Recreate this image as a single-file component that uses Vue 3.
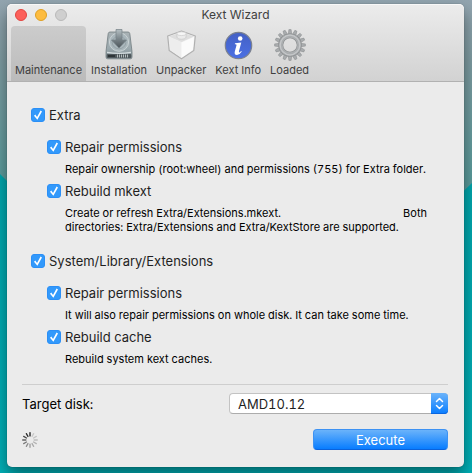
<script setup>
import { ref } from 'vue'

const tabs = [
  { id: 'maintenance', label: 'Maintenance' },
  { id: 'installation', label: 'Installation' },
  { id: 'unpacker', label: 'Unpacker' },
  { id: 'info', label: 'Kext Info' },
  { id: 'loaded', label: 'Loaded' },
]
const active = ref('maintenance')
const disk = ref('AMD10.12')

const groups = ref([
  {
    id: 'extra',
    label: 'Extra',
    on: true,
    items: [
      {
        id: 'extra-repair',
        label: 'Repair permissions',
        on: true,
        lines: [['Repair ownership (root:wheel) and permissions (755) for Extra folder.']],
      },
      {
        id: 'extra-mkext',
        label: 'Rebuild mkext',
        on: true,
        lines: [
          ['Create or refresh Extra/Extensions.mkext.', 'Both'],
          ['directories: Extra/Extensions and Extra/KextStore are supported.'],
        ],
      },
    ],
  },
  {
    id: 'sle',
    label: 'System/Library/Extensions',
    on: true,
    items: [
      {
        id: 'sle-repair',
        label: 'Repair permissions',
        on: true,
        lines: [['It will also repair permissions on whole disk. It can take some time.']],
      },
      {
        id: 'sle-cache',
        label: 'Rebuild cache',
        on: true,
        lines: [['Rebuild system kext caches.']],
      },
    ],
  },
])

// Spinner spokes, clockwise from twelve o'clock; the darkest one leads.
const spokes = [0.9, 0.15, 0.17, 0.2, 0.24, 0.28, 0.34, 0.4, 0.48, 0.58, 0.7, 0.82]
const teeth = Array.from({ length: 16 }, (_, i) => (i * 360) / 16)
</script>

<template>
  <div class="desktop">
    <main class="window">
      <header class="chrome">
        <div class="titlebar">
          <div class="lights">
            <button class="light close" aria-label="Close"></button>
            <button class="light minimise" aria-label="Minimise"></button>
            <button class="light zoom" aria-label="Zoom" disabled></button>
          </div>
          <h1>Kext Wizard</h1>
        </div>
        <nav class="toolbar">
          <button
            v-for="t in tabs"
            :key="t.id"
            class="tab"
            :class="{ active: active === t.id }"
            @click="active = t.id"
          >
            <svg v-if="t.id === 'installation'" class="icon" viewBox="0 0 32 32" aria-hidden="true">
              <defs>
                <linearGradient id="case" x1="0" y1="0" x2="0" y2="1">
                  <stop offset="0" stop-color="#a9b2b5" />
                  <stop offset="0.6" stop-color="#9caaaf" />
                  <stop offset="1" stop-color="#7f8b90" />
                </linearGradient>
                <linearGradient id="arrow" x1="0" y1="0" x2="0" y2="1">
                  <stop offset="0" stop-color="#b4bec2" />
                  <stop offset="0.5" stop-color="#7b868b" />
                  <stop offset="1" stop-color="#4b5459" />
                </linearGradient>
              </defs>
              <path d="M7 3h18q1.500 0 1.800 1.600L29 22.500V28q0 1.800-1.600 1.800H4.600Q3 29.800 3 28v-5.500L5.200 4.600Q5.500 3 7 3z" fill="url(#case)" stroke="#727d81" stroke-width=".8" />
              <ellipse cx="16" cy="13" rx="9.600" ry="9.300" fill="#a9b6bb" stroke="#c9d2d4" stroke-width="1" />
              <ellipse cx="16" cy="13.500" rx="6.800" ry="6.300" fill="none" stroke="#8d999e" stroke-width=".7" />
              <path d="M4 23.300q12 2 24 0" fill="none" stroke="#d5dddf" stroke-width="1.200" />
              <rect x="3.800" y="25" width="24.400" height="4" rx="1" fill="#4f585c" />
              <path d="M14.500 25.500v3M16.500 25.500v3M18.500 25.500v3M20.500 25.500v3M22.500 25.500v3M24.500 25.500v3" stroke="#c1c8ca" stroke-width=".9" />
              <path d="M5 27h7" stroke="#2b3235" stroke-width="1.800" />
              <path d="M13 .5h6v10.500h4.500L16 19l-7.500-8H13z" fill="url(#arrow)" stroke="#768186" stroke-width=".7" />
            </svg>
            <svg v-else-if="t.id === 'unpacker'" class="icon" viewBox="0 0 32 32" aria-hidden="true">
              <path d="M2.700 7 16.500 2 30.300 7 28.800 21.500 16.500 29.800 4.200 21.500z" fill="#f0f0f0" stroke="#b0b0b0" stroke-width="1.200" stroke-linejoin="round" />
              <path d="M4 7.500 16.500 3 29 7.500 16.500 13z" fill="#dedede" />
              <path d="M4 8 16.500 13.400v15.300L5.200 21z" fill="#ededed" />
              <path d="M29 8 16.500 13.400v15.300L27.800 21z" fill="#fbfbfb" />
              <path d="M12 4.700v3.400c0 2.800 9 2.800 9 0V4.700z" fill="#ebebeb" stroke="#c4c4c4" stroke-width=".6" />
              <ellipse cx="16.500" cy="4.700" rx="4.500" ry="1.900" fill="#f6f6f6" stroke="#c4c4c4" stroke-width=".6" />
            </svg>
            <svg v-else-if="t.id === 'info'" class="icon" viewBox="0 0 32 32" aria-hidden="true">
              <defs>
                <linearGradient id="ball" x1="0" y1="0" x2="0" y2="1">
                  <stop offset="0" stop-color="#4460c4" />
                  <stop offset="1" stop-color="#4b70e4" />
                </linearGradient>
              </defs>
              <circle cx="16.500" cy="16.500" r="13.200" fill="url(#ball)" stroke="#7b818f" stroke-width="1.200" />
              <circle cx="18.200" cy="9.500" r="2.300" fill="#fff" />
              <path d="M13 14.200 19.300 13.400 17 22q-.4 1.600.6 1.400.8-.3 1.500-1.300l.7.500q-2 3.300-4.800 3.300-3 0-2.200-3.500l1.700-6.200q.3-1.200-1.700-1z" fill="#fff" />
            </svg>
            <svg v-else-if="t.id === 'loaded'" class="icon" viewBox="0 0 32 32" aria-hidden="true">
              <path
                v-for="a in teeth"
                :key="a"
                d="M14.200 5.500 14.900.6h2.200l.7 4.900z"
                :transform="`rotate(${a} 16 16)`"
                fill="#a9acae"
                stroke="#86898b"
                stroke-width=".5"
              />
              <circle cx="16" cy="16" r="9.200" fill="none" stroke="#86898b" stroke-width="4.800" />
              <circle cx="16" cy="16" r="9.200" fill="none" stroke="#abaeb0" stroke-width="3.800" />
              <circle cx="16" cy="16" r="9.800" fill="none" stroke="#c6c8ca" stroke-width="1.200" />
            </svg>
            <span v-else class="icon"></span>
            <span>{{ t.label }}</span>
          </button>
        </nav>
      </header>

      <form class="body" @submit.prevent>
        <section v-for="g in groups" :key="g.id" class="group">
          <div class="check">
            <input :id="g.id" v-model="g.on" type="checkbox" />
            <label :for="g.id">{{ g.label }}</label>
          </div>
          <div class="items">
            <div v-for="it in g.items" :key="it.id">
              <div class="check">
                <input :id="it.id" v-model="it.on" type="checkbox" />
                <label :for="it.id">{{ it.label }}</label>
              </div>
              <div class="note">
                <div v-for="(line, i) in it.lines" :key="i" class="line">
                  <span v-for="part in line" :key="part">{{ part }}</span>
                </div>
              </div>
            </div>
          </div>
        </section>

        <footer class="footer">
          <div class="row">
            <label for="disk">Target disk:</label>
            <div class="picker">
              <select id="disk" v-model="disk">
                <option>AMD10.12</option>
              </select>
              <svg class="stepper" viewBox="0 0 17 21" aria-hidden="true">
                <path d="M5.500 8.500 8.500 5.500l3 3M5.500 12.500l3 3 3-3" fill="none" stroke="#fff" stroke-width="1.500" stroke-linecap="round" stroke-linejoin="round" />
              </svg>
            </div>
          </div>
          <div class="row">
            <svg class="spinner" viewBox="0 0 16 16" role="img" aria-label="Working">
              <path
                v-for="(o, i) in spokes"
                :key="i"
                d="M8 .7v3.200"
                stroke="#000"
                stroke-width="1.300"
                stroke-linecap="round"
                :stroke-opacity="o"
                :transform="`rotate(${i * 30} 8 8)`"
              />
            </svg>
            <button class="execute" type="submit">Execute</button>
          </div>
        </footer>
      </form>
    </main>
  </div>
</template>

<style>
body {
  margin: 0;
}
</style>

<style scoped>
* {
  box-sizing: border-box;
}

.desktop {
  position: relative;
  z-index: 0;
  display: flex;
  min-height: 100vh;
  padding: 4px 8px 6px 7px;
  overflow: hidden;
  background: linear-gradient(#93a5b0, #7f9ca2 60px, #5a9c9c 180px);
  font-family: Inter, "Liberation Sans", sans-serif;
  font-size: 13px;
  font-variant-numeric: tabular-nums;
  color: #1f1f1f;
}

.desktop::before {
  content: "";
  position: absolute;
  inset: 0;
  z-index: -1;
  background: linear-gradient(#00a0a6, #00b0b7);
  clip-path: polygon(0 174px, 50% 410px, 100% 183px, 100% 100%, 0 100%);
}

.window {
  flex: 1;
  display: flex;
  flex-direction: column;
  min-width: 0;
  border-radius: 5px;
  background: #ebebeb;
  box-shadow: 0 0 1px rgba(0, 0, 0, 0.5), 0 8px 16px rgba(0, 0, 0, 0.42);
}

.chrome {
  border-bottom: 1px solid #b1b1b1;
  border-radius: 5px 5px 0 0;
  background: linear-gradient(#ececec, #d2d2d2);
  box-shadow: inset 0 1px #f8f8f8;
}

.titlebar {
  display: grid;
  grid-template-columns: 1fr auto 1fr;
  align-items: center;
  height: 22px;
  padding: 0 8px;
}

.lights {
  display: flex;
  gap: 8px;
}

.light {
  width: 12px;
  height: 12px;
  padding: 0;
  border: 1px solid;
  border-radius: 50%;
}

.close {
  border-color: #e2443f;
  background: #fc605b;
}

.minimise {
  border-color: #dfa023;
  background: #fdbc40;
}

.zoom {
  border-color: #b9b9b9;
  background: #cfcfcf;
}

h1 {
  margin: 0;
  font-size: 12px;
  font-weight: 400;
  line-height: 22px;
  color: #404040;
}

.toolbar {
  display: flex;
  gap: 1px;
  padding-left: 4px;
}

.tab {
  display: flex;
  flex-direction: column;
  align-items: center;
  height: 55px;
  padding: 3px 4px 0;
  border: 0;
  border-radius: 4px 4px 0 0;
  background: none;
  font: inherit;
  font-size: 11px;
  line-height: 18px;
  color: #404040;
}

.tab.active {
  background: linear-gradient(#cccccc, #bbbbbb);
}

.icon {
  width: 32px;
  height: 32px;
}

.body {
  flex: 1;
  padding: 22px 16px 16px 15px;
}

.group {
  padding: 0 21px 12px 9px;
}

.group + .group {
  padding-bottom: 14px;
}

.check {
  display: flex;
  align-items: center;
  gap: 4px;
  height: 22px;
}

.check input {
  appearance: none;
  display: grid;
  place-items: center;
  width: 14px;
  height: 14px;
  margin: 0;
  border: 1px solid #b5b5b5;
  border-radius: 3px;
  background: #fff;
}

.check input:checked {
  border-color: #2b8ff6;
  background: #3299fb;
}

.check input:checked::after {
  content: "";
  width: 8px;
  height: 10px;
  background: #fff;
  clip-path: polygon(0 58%, 16% 46%, 38% 70%, 82% 4%, 100% 14%, 42% 98%);
}

.items {
  padding: 10px 0 0 16px;
}

.note {
  padding: 4px 0 4px 18px;
  font-size: 11px;
  line-height: 14px;
  color: #000;
}

.line {
  display: flex;
  justify-content: space-between;
  white-space: nowrap;
}

.footer {
  display: flex;
  flex-direction: column;
  gap: 15px;
  padding-top: 8px;
  border-top: 1px solid #cecece;
}

.row {
  display: flex;
  align-items: center;
  justify-content: space-between;
  color: #000;
}

.picker {
  position: relative;
  width: 50%;
  min-width: 219px;
}

select {
  appearance: none;
  display: block;
  width: 100%;
  height: 21px;
  padding: 0 24px 0 8px;
  border: 1px solid #c3c3c3;
  border-bottom-color: #acacac;
  border-radius: 4px;
  background: #fff;
  font: inherit;
  font-variant-numeric: tabular-nums;
  color: #1f1f1f;
}

.stepper {
  position: absolute;
  top: 0;
  right: 0;
  width: 17px;
  height: 21px;
  border-radius: 0 4px 4px 0;
  background: linear-gradient(#6bb3fa, #087dff);
  box-shadow: inset 0 -1px #0a66e0;
}

.spinner {
  width: 16px;
  height: 16px;
}

.execute {
  width: 135px;
  height: 21px;
  padding: 0;
  border: 1px solid #3d92f3;
  border-bottom-color: #0a62dc;
  border-radius: 4px;
  background: linear-gradient(#6bb3fa, #087dff);
  font: inherit;
  color: #fff;
}
</style>
